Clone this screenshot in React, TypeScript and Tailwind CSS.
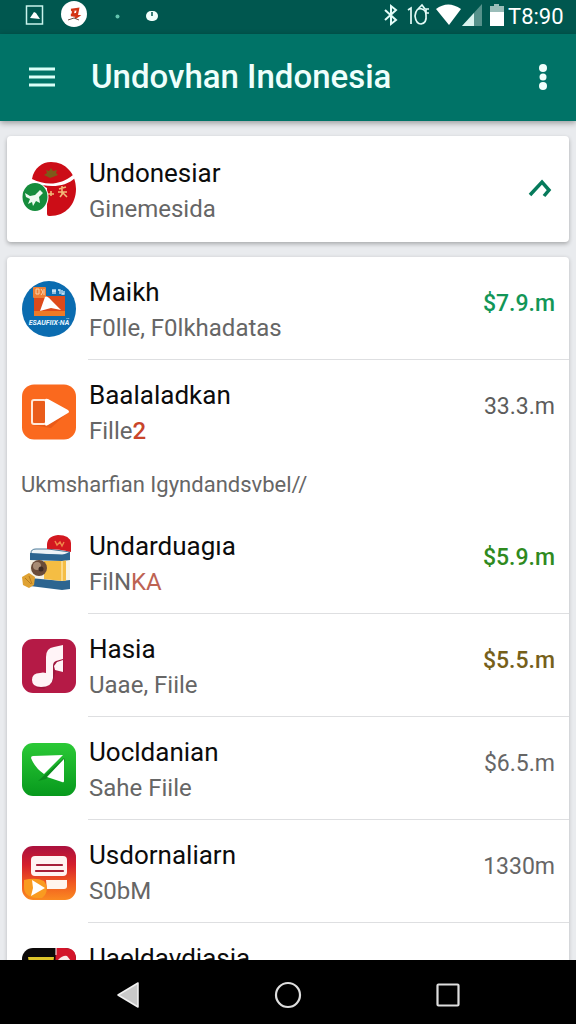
import type { ReactNode } from "react";

type Item = {
  title: string;
  subtitle: string;
  accent?: string;
  accentClass?: string;
  price: string;
  priceClass: string;
  icon: ReactNode;
  divider?: boolean;
};

function FlagIcon() {
  return (
    <svg viewBox="0 0 54 56" className="h-14 w-[54px] shrink-0" aria-hidden="true">
      <path d="M10 18C12 7 20 1 29 1c15 0 25 12 25 27S44 55 28 55c-3 0-3-1-3-4V27L10 20z" fill="#cc0d17" />
      <path d="M10 18c14 7 29 6 41-4l2 3C42 27 26 27 9 21z" fill="#fff" />
      <path d="M24 9l3 1 2-3 2 3 4-1-1 3 2 2-5 2-3 1-4-2-2-1 3-2z" fill="#7d5a1a" />
      <path d="M26 33h6M29 30v5M37 28l7-2M40 25v8M36 31h9M38 36l3-4 4 4" stroke="#f2b978" strokeWidth="1.6" fill="none" />
      <ellipse cx="13" cy="36" rx="13.5" ry="15" fill="#fff" />
      <ellipse cx="13" cy="36" rx="12.5" ry="14" fill="#168c3c" />
      <path d="M3 32l5 3 5-1 5-5 3 3-4 4 1 6-4-2-3 5-1-4-4 2 2-5-4-2z" fill="#eefaf0" />
    </svg>
  );
}

function BlueDiscIcon() {
  return (
    <svg viewBox="0 0 54 56" className="h-14 w-[54px] shrink-0" aria-hidden="true">
      <ellipse cx="27" cy="28" rx="27" ry="28" fill="#0b6cb0" />
      <path d="M12 15h31v20H12z" fill="#dd4a1b" />
      <path d="M12 30h31v5H12z" fill="#ef7a26" />
      <rect x="11" y="6" width="13" height="11" rx="1" fill="#ee7f35" />
      <path d="M14 8h3v5h-3zM19 8l2 3-2 3M22 8v6" stroke="#f9d3ac" strokeWidth="1" fill="none" />
      <path d="M23 16q2-2 6 3l10 10-10-2-11 3z" fill="#fff" />
      <path d="M31 8v5M30 10h4M33 8v5M36 9h2v4M40 9v4h2v-3" stroke="#d6ebfa" strokeWidth="1.3" fill="none" />
      <text x="27" y="44" textAnchor="middle" fill="#e6f4ff" className="font-['Roboto',sans-serif] text-[7px] font-bold italic">ESAUFIIX·NÄ</text>
    </svg>
  );
}

function OrangePlayIcon() {
  return (
    <svg viewBox="0 0 54 56" className="h-14 w-[54px] shrink-0" aria-hidden="true">
      <rect y="0.5" width="54" height="55" rx="12" fill="#fa691e" />
      <path d="M10 41h13l22-12-16 15z" fill="#dd4f12" opacity="0.55" />
      <rect x="10" y="16" width="14" height="24" rx="2" fill="#ea5c1a" stroke="#ffe8d8" strokeWidth="2" />
      <path d="M23 16q0-2 3-1l20 11q2 2 0 3L26 41q-3 2-3-1z" fill="#fff" />
    </svg>
  );
}

function SuitcaseIcon() {
  return (
    <svg viewBox="0 0 54 56" className="h-14 w-[54px] shrink-0" aria-hidden="true">
      <path d="M9 18q0-4 5-4h12l22 3-4 3-34-1z" fill="#eef3f6" stroke="#4b7998" strokeWidth="1" />
      <path d="M25 12Q24 1 36 0q12 0 13 8v9q-11-3-24-3z" fill="#d31820" />
      <path d="M33 6l2 4 3-3 2 4 2-4" stroke="#f08a4a" strokeWidth="1.4" fill="none" />
      <path d="M8 18l32 2 8-3v37l-8 1-32-4z" fill="#2d6590" />
      <path d="M8 25l32 1 8-1v20l-8 1-32-3z" fill="#f7f3e6" />
      <path d="M22 26h18l4-.5v20l-4 .5-18-2z" fill="#f5bd43" />
      <path d="M40 26v20" stroke="#fce29a" strokeWidth="1.5" />
      <circle cx="17" cy="33" r="8" fill="#6a4b38" />
      <circle cx="15" cy="31" r="4" fill="#a88c74" />
      <circle cx="19" cy="34" r="2.5" fill="#3e2b23" />
      <path d="M0 42l7-4 6 4-1 8-5 3-6-3z" fill="#dfa233" />
      <path d="M3 43l6 6M7 41l3 8" stroke="#b87b1d" strokeWidth="1" />
    </svg>
  );
}

function MusicIcon() {
  return (
    <svg viewBox="0 0 54 56" className="h-14 w-[54px] shrink-0" aria-hidden="true">
      <rect y="1" width="54" height="54" rx="11" fill="#b51a46" />
      <path d="M31 24l10-3 1 13-8-2-3 11-9 8-8-1z" fill="#8b1237" opacity="0.55" />
      <path d="M24 35V19Q24 10 32 9l9-2v14l-7 2q-3 1-3 5v12q-1 9-12 9-9 0-9-7t8-7q3-1 6 0z" fill="#fff4f7" />
      <path d="M32 28l3-4 6-2v12l-8-2z" fill="#fff4f7" />
    </svg>
  );
}

function GreenSendIcon() {
  return (
    <svg viewBox="0 0 54 56" className="h-14 w-[54px] shrink-0" aria-hidden="true">
      <defs>
        <linearGradient id="green-send" x1="0" y1="0" x2="0" y2="1">
          <stop offset="0" stopColor="#2bc936" />
          <stop offset="1" stopColor="#07991d" />
        </linearGradient>
      </defs>
      <rect y="2" width="54" height="53" rx="11" fill="url(#green-send)" />
      <path d="M42 17L16 40l8-2 19-18z" fill="#087c19" opacity="0.7" />
      <path d="M9 17q0-2 2-2l30-1-19 19q-9-6-13-16z" fill="#fff" />
      <path d="M42 18v22q0 2-2 1l-15-5z" fill="#fff" />
    </svg>
  );
}

function NotesIcon() {
  return (
    <svg viewBox="0 0 54 56" className="h-14 w-[54px] shrink-0" aria-hidden="true">
      <defs>
        <linearGradient id="notes" x1="0" y1="0" x2="0" y2="1">
          <stop offset="0" stopColor="#aa113e" />
          <stop offset="0.35" stopColor="#d51f2c" />
          <stop offset="0.7" stopColor="#f15b20" />
          <stop offset="1" stopColor="#fa8a21" />
        </linearGradient>
      </defs>
      <rect y="2" width="54" height="54" rx="11" fill="url(#notes)" />
      <rect x="9" y="12" width="36" height="20" rx="4" fill="#fff3f2" />
      <path d="M15 21h25M14 27h27" stroke="#a71e39" strokeWidth="2.2" strokeLinecap="round" />
      <path d="M24 36h21v6q0 3-3 3H25z" fill="#fff6ed" />
      <path d="M2 36q12-3 20 1 5 7 1 14l-3 3q-18 1-18-11z" fill="#f99b20" />
      <path d="M10 36l13 8-14 8 2-8z" fill="#fff" />
    </svg>
  );
}

function DarkIcon() {
  return (
    <svg viewBox="0 0 54 56" className="h-14 w-[54px] shrink-0" aria-hidden="true">
      <rect y="1" width="54" height="54" rx="11" fill="#0c0909" />
      <path d="M34 1h9q11 0 11 11v10H33z" fill="#d3142a" />
      <path d="M34 1v7" stroke="#fff" strokeWidth="1" />
      <path d="M6 10h26l-2 17H9z" fill="#e0c62b" />
      <path d="M10 13h8v7h-8zM21 13h7l-2 7h-5z" fill="#15120c" />
      <path d="M36 13q5-5 9-4l4 5-7 9z" fill="#f9e9e9" />
    </svg>
  );
}

const items: Item[] = [
  { title: "Maikh", subtitle: "F0lle, F0lkhadatas", price: "$7.9.m", priceClass: "font-medium text-[#129657]", icon: <BlueDiscIcon />, divider: true },
  { title: "Baalaladkan", subtitle: "Fille", accent: "2", accentClass: "font-medium text-[#c8452b]", price: "33.3.m", priceClass: "text-[#5c5c5c]", icon: <OrangePlayIcon /> },
];

const sectionItems: Item[] = [
  { title: "Undarduagıa", subtitle: "FilN", accent: "KA", accentClass: "text-[#bd6353]", price: "$5.9.m", priceClass: "font-medium text-[#2f8a1e]", icon: <SuitcaseIcon />, divider: true },
  { title: "Hasia", subtitle: "Uaae, Fiile", price: "$5.5.m", priceClass: "font-medium text-[#76601a]", icon: <MusicIcon />, divider: true },
  { title: "Uocldanian", subtitle: "Sahe Fiile", price: "$6.5.m", priceClass: "text-[#666666]", icon: <GreenSendIcon />, divider: true },
  { title: "Usdornaliarn", subtitle: "S0bM", price: "1330m", priceClass: "text-[#666666]", icon: <NotesIcon />, divider: true },
  { title: "Uaeldavdiasia", subtitle: "Fiile", price: "33.3.m", priceClass: "text-[#5c5c5c]", icon: <DarkIcon /> },
];

function Row({ item }: { item: Item }) {
  return (
    <li className="flex h-[103px] items-stretch pl-[15px]">
      <span className="flex items-center pr-3">{item.icon}</span>
      <div className={`flex min-w-0 flex-1 items-center justify-between border-b pr-[14px] pl-px ${item.divider ? "border-[#dedfe1]" : "border-transparent"}`}>
        <div className="pt-1">
          <h2 className="text-[26px] leading-9 text-[#0c0c0c]">{item.title}</h2>
          <p className="text-2xl leading-9 text-[#666666]">
            {item.subtitle}
            {item.accent && <span className={item.accentClass}>{item.accent}</span>}
          </p>
        </div>
        <span className={`pb-2 text-[23px] leading-8 ${item.priceClass}`}>{item.price}</span>
      </div>
    </li>
  );
}

function StatusBar() {
  return (
    <div className="flex h-[34px] shrink-0 items-center justify-between bg-[#00574f] pr-3.5 pl-6 text-white">
      <svg viewBox="0 0 140 34" className="h-[34px] w-[140px]" aria-hidden="true">
        <rect x="2.5" y="6" width="16" height="18" fill="none" stroke="#c8f3ec" strokeWidth="1.5" />
        <path d="M6 18l4-6 2 1 4 6z" fill="#fff" />
        <circle cx="50" cy="14" r="13" fill="#fff" />
        <path d="M47 10l7-1-1 5-6 1 7 1-3 2M50 9l-2 7" stroke="#d43516" strokeWidth="2.4" fill="none" />
        <path d="M44 20l6-2 5 2" stroke="#6f5149" strokeWidth="1" fill="none" />
        <circle cx="93.5" cy="16.5" r="2" fill="#63c4ae" />
        <rect x="122" y="11" width="12" height="10" rx="5" fill="#f1fffc" />
        <path d="M128 12v4" stroke="#00574f" strokeWidth="1.5" />
      </svg>
      <div className="flex items-center">
        <svg viewBox="0 0 124 34" className="h-[34px] w-[124px]" aria-hidden="true">
          <path d="M1 10l11 10-5 4V6l5 4L1 20" fill="none" stroke="#e3fbf7" strokeWidth="2" />
          <path d="M24 10l3-2v16M38 9q-6-2-7 7 1 8 6 8 6-1 5-9 0-5-4-6zM34 9l4-4 3 4M45 9h-3v4h3" fill="none" stroke="#e3fbf7" strokeWidth="1.7" />
          <path d="M52 9q12-9 25 0L65 25z" fill="#fff" />
          <path d="M78 26l20-22v22z" fill="#55928b" />
          <path d="M78 26l12-13v13z" fill="#d9f4ef" />
          <path d="M106 6h4V4h5v2h5v7h-14z" fill="#9bbdb9" />
          <path d="M106 12h14v14h-14z" fill="#fff" />
        </svg>
        <span className="w-[54px] text-right text-[22px] leading-8">T8:90</span>
      </div>
    </div>
  );
}

export default function App() {
  return (
    <div className="flex h-screen flex-col overflow-hidden bg-[#e9ebee] font-['Roboto',sans-serif]">
      <StatusBar />
      <header className="z-10 flex h-[87px] shrink-0 items-center bg-[#007367] pr-3 pb-0.5 pl-[21px] text-[#effffc] shadow-[0_2px_6px_rgba(0,0,0,0.35)]">
        <button type="button" aria-label="Open menu" className="flex size-[42px] items-center justify-center">
          <svg viewBox="0 0 26 20" className="h-5 w-[26px]" aria-hidden="true">
            <path d="M0 2h26M0 10h26M0 18h26" stroke="#d9fff8" strokeWidth="3" />
          </svg>
        </button>
        <h1 className="ml-7 flex-1 text-[33px] leading-10 font-medium">Undovhan Indonesia</h1>
        <button type="button" aria-label="More options" className="flex size-[42px] items-center justify-center">
          <svg viewBox="0 0 10 28" className="h-7 w-2.5" aria-hidden="true">
            <circle cx="5" cy="5" r="4" fill="#effffc" />
            <circle cx="5" cy="14" r="3.5" fill="#effffc" />
            <circle cx="5" cy="23" r="4" fill="#effffc" />
          </svg>
        </button>
      </header>

      <main className="flex min-h-0 flex-1 flex-col gap-[15px] overflow-hidden px-[7px] pt-[15px]">
        <section className="flex h-[106px] shrink-0 items-center rounded-sm bg-white pr-[15px] pl-[15px] shadow-[0_2px_4px_rgba(0,0,0,0.28)]">
          <FlagIcon />
          <div className="ml-3 flex-1 pt-1 pl-px">
            <h2 className="text-[26px] leading-9 text-[#0c0c0c]">Undonesiar</h2>
            <p className="text-2xl leading-9 text-[#666666]">Ginemesida</p>
          </div>
          <button type="button" aria-label="Collapse" className="flex h-8 w-7 items-center justify-center">
            <svg viewBox="0 0 24 20" className="h-5 w-6" aria-hidden="true">
              <path d="M2 16L14 3l7 8-5 6" fill="none" stroke="#067a5b" strokeWidth="3.5" />
            </svg>
          </button>
        </section>

        <section className="shrink-0 rounded-sm bg-white shadow-[0_1px_4px_rgba(0,0,0,0.2)]">
          <ul>
            {items.map((item) => (
              <Row key={item.title} item={item} />
            ))}
          </ul>
          <h3 className="flex h-12 items-center pb-1 pl-3.5 text-[22px] leading-8 text-[#666666]">Ukmsharfian Igyndandsvbel//</h3>
          <ul>
            {sectionItems.map((item) => (
              <Row key={item.title} item={item} />
            ))}
          </ul>
        </section>
      </main>

      <nav aria-label="System navigation" className="z-10 flex h-16 shrink-0 items-center justify-center bg-black pt-1.5">
        <button type="button" aria-label="Back" className="flex h-12 w-40 items-center justify-center">
          <svg viewBox="0 0 24 28" className="h-7 w-6" aria-hidden="true">
            <path d="M2 14L22 2v24z" fill="#c9c9c9" stroke="#f2f2f2" strokeWidth="1.5" strokeLinejoin="round" />
          </svg>
        </button>
        <button type="button" aria-label="Home" className="flex h-12 w-40 items-center justify-center">
          <svg viewBox="0 0 28 28" className="size-7" aria-hidden="true">
            <circle cx="14" cy="14" r="12" fill="none" stroke="#dedede" strokeWidth="2.2" />
          </svg>
        </button>
        <button type="button" aria-label="Recent apps" className="flex h-12 w-40 items-center justify-center">
          <svg viewBox="0 0 24 24" className="size-6" aria-hidden="true">
            <rect x="1.5" y="1.5" width="21" height="21" rx="1" fill="none" stroke="#dedede" strokeWidth="2.2" />
          </svg>
        </button>
      </nav>
    </div>
  );
}
